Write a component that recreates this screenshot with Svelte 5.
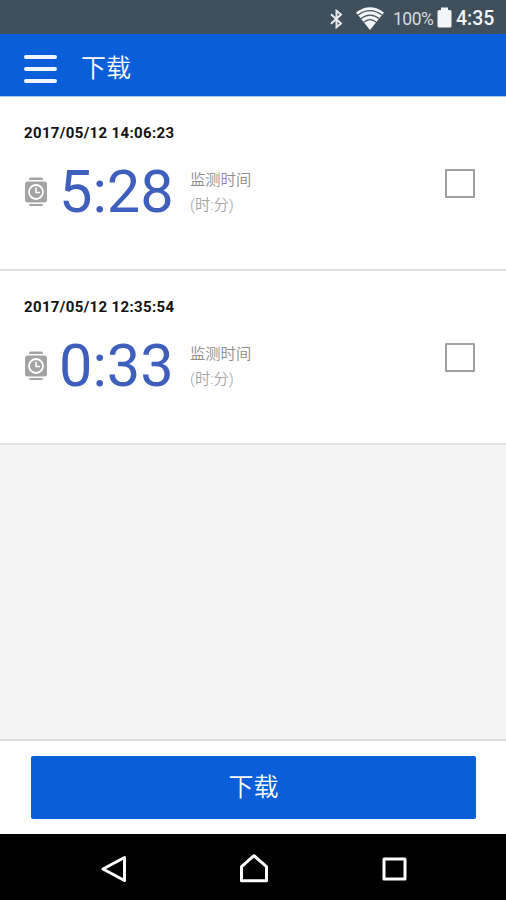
<script>
    let registros = [
        { fecha: "2017/05/12 14:06:23", tiempo: "5:28", elegido: false },
        { fecha: "2017/05/12 12:35:54", tiempo: "0:33", elegido: false },
    ];
</script>

<div class="pantalla">
    <div class="estado">
        <svg class="bluetooth" width="15" height="20" viewBox="0 0 15 20">
            <path
                d="M2 5.2 L12 14.5 L7.5 18.2 V1.8 L12 5.5 L2 14.8"
                fill="none"
                stroke="#e6eaec"
                stroke-width="2"
            />
        </svg>
        <svg class="wifi" width="28" height="23" viewBox="0 0 28 23">
            <path d="M0 5.5 Q14 -5 28 5.5 L14 23 Z" fill="#f3f5f6" />
            <g fill="none" stroke="#455661" stroke-width="1.2">
                <path d="M2 8 Q14 -0.8 26 8" />
                <path d="M4.5 11.8 Q14 4.4 23.5 11.8" />
                <path d="M7.5 15.4 Q14 9.8 20.5 15.4" />
            </g>
        </svg>
        <span class="porcentaje">100%</span>
        <svg class="bateria" width="15" height="21" viewBox="0 0 15 21">
            <path
                d="M4 0.5 H11 V3 H13 Q14.5 3 14.5 4.5 V19 Q14.5 20.5 13 20.5 H2 Q0.5 20.5 0.5 19 V4.5 Q0.5 3 2 3 H4 Z"
                fill="#f3f5f6"
            />
        </svg>
        <span class="hora">4:35</span>
    </div>

    <header class="cabecera">
        <button class="menu" aria-label="菜单">
            <span></span>
            <span></span>
            <span></span>
        </button>
        <h1>下载</h1>
    </header>

    <!-- Lista de registros -->
    <main class="lista">
        {#each registros as registro}
            <div class="registro">
                <p class="fecha">{registro.fecha}</p>
                <div class="datos">
                    <svg class="reloj" width="22" height="30" viewBox="0 0 22 30">
                        <path
                            d="M5 0.5 H17 L18.5 3 H3.5 Z M3.5 27 H18.5 L17 29 H5 Z"
                            fill="#a3a3a3"
                        />
                        <rect y="4.5" width="22" height="21" rx="2.5" fill="#a3a3a3" />
                        <circle
                            cx="11"
                            cy="15"
                            r="7"
                            fill="none"
                            stroke="#fff"
                            stroke-width="1.8"
                        />
                        <path
                            d="M11 10.5 V15.5 H15"
                            fill="none"
                            stroke="#fff"
                            stroke-width="1.6"
                        />
                    </svg>
                    <span class="tiempo">{registro.tiempo}</span>
                    <div class="etiqueta">
                        <p>监测时间</p>
                        <p class="unidad">(时:分)</p>
                    </div>
                    <input
                        type="checkbox"
                        aria-label={registro.fecha}
                        bind:checked={registro.elegido}
                    />
                </div>
            </div>
        {/each}
    </main>

    <footer class="pie">
        <button class="descargar">下载</button>
    </footer>

    <nav class="navegacion">
        <svg width="28" height="30" viewBox="0 0 28 30">
            <path d="M3 15 L24.5 3.5 V26.5 Z" />
        </svg>
        <svg width="30" height="30" viewBox="0 0 30 30">
            <path d="M2.5 26.7 V12.7 L15 1.7 L27.5 12.7 V26.7 Z" />
        </svg>
        <svg width="28" height="30" viewBox="0 0 28 30">
            <rect x="4" y="5" width="21" height="20" />
        </svg>
    </nav>
</div>

<style>
    :global(body) {
        margin: 0;
    }
    .pantalla {
        display: flex;
        flex-direction: column;
        width: 100%;
        height: 100vh;
        overflow: hidden;
        background-color: #f4f4f4;
        font-family: Roboto, "Noto Sans CJK SC", sans-serif;
    }
    p,
    h1 {
        margin: 0;
    }
    button {
        border: none;
        padding: 0;
        font-family: inherit;
    }

    .estado {
        display: flex;
        align-items: center;
        justify-content: flex-end;
        flex: none;
        box-sizing: border-box;
        height: 34px;
        padding: 3px 11px 0 0;
        background-color: #3f505c;
        color: #f3f5f6;
    }
    .bluetooth {
        margin-right: 12px;
    }
    .wifi {
        margin-right: 9px;
    }
    .porcentaje {
        width: 44px;
        font-size: 17.5px;
        letter-spacing: -0.5px;
        color: #d5dade;
    }
    .bateria {
        margin: 0 4px 3px 0;
    }
    .hora {
        width: 39px;
        font-size: 19.5px;
        font-weight: 500;
    }

    .cabecera {
        display: flex;
        align-items: center;
        flex: none;
        box-sizing: border-box;
        height: 63px;
        padding-left: 24px;
        background-color: #0b5ed9;
        border-bottom: 1px solid #a9c6f1;
        color: #fff;
    }
    .menu {
        display: flex;
        flex-direction: column;
        gap: 8px;
        width: 33px;
        margin-top: 7px;
        background: none;
    }
    .menu span {
        height: 4px;
        border-radius: 2px;
        background-color: #eff4ff;
    }
    h1 {
        margin: 7px 0 0 24px;
        font-size: 25px;
        font-weight: 350;
        line-height: 55px;
    }

    .lista {
        flex: 1;
    }
    .registro {
        box-sizing: border-box;
        height: 174px;
        padding: 26px 31px 0 24px;
        background-color: #fff;
        border-bottom: 2px solid #e0e0e0;
    }
    .fecha {
        font-size: 15px;
        font-weight: 700;
        line-height: 20px;
        letter-spacing: 0.35px;
        color: #111;
    }
    .datos {
        display: flex;
        align-items: center;
        height: 72px;
        margin-top: 13px;
    }
    .reloj {
        margin: 0 0 0 1px;
    }
    .tiempo {
        width: 131px;
        margin-left: 12px;
        font-size: 59.5px;
        line-height: 72px;
        color: #3f5fbc;
    }
    .etiqueta {
        margin-top: 1px;
        font-size: 15.3px;
        font-weight: 350;
        line-height: 25px;
        color: #8c8c8c;
    }
    .unidad {
        color: #a6a6a6;
    }
    input {
        appearance: none;
        width: 30px;
        height: 29px;
        margin: 0 0 18px auto;
        border: 2px solid #a0a0a0;
        border-radius: 1px;
        background-color: #fff;
    }
    input:checked {
        background-color: #0b5ed9;
    }

    .pie {
        flex: none;
        box-sizing: border-box;
        height: 95px;
        padding: 15px 30px 0 31px;
        background-color: #fff;
        border-top: 2px solid #dedede;
    }
    .descargar {
        width: 100%;
        height: 63px;
        padding-bottom: 6px;
        border-radius: 2px;
        background-color: #0b5ed9;
        color: #fff;
        font-size: 25px;
        font-weight: 350;
    }

    .navegacion {
        display: flex;
        align-items: center;
        justify-content: space-between;
        flex: none;
        box-sizing: border-box;
        height: 66px;
        padding: 4px 98px 0 100px;
        background-color: #000;
    }
    .navegacion svg {
        fill: none;
        stroke: #fff;
        stroke-width: 3;
        stroke-linejoin: round;
    }
</style>
